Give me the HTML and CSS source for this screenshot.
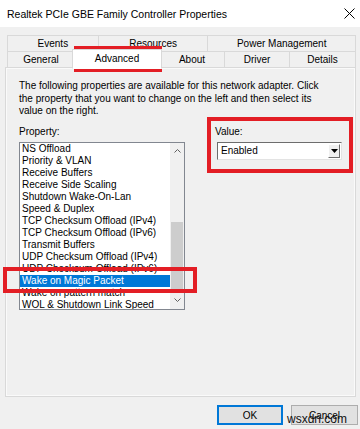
FILE: index.html
```html
<!DOCTYPE html>
<html lang="en">
<head>
    <meta charset="UTF-8">
    <title>Realtek PCIe GBE Family Controller Properties</title>
    <link rel="stylesheet" href="styles.css">
</head>
<body>
    <div class="window">
        <div class="titlebar">
            <span class="title">Realtek PCIe GBE Family Controller Properties</span>
            <svg class="close" width="11" height="11" viewBox="0 0 11 11">
                <path d="M0.5 0.5 L10.5 10.5 M10.5 0.5 L0.5 10.5" stroke="#000" stroke-width="1" fill="none"/>
            </svg>
        </div>

        <div class="tabs">
            <div class="tab-row">
                <div class="tab w-events">Events</div>
                <div class="tab w-resources">Resources</div>
                <div class="tab w-power">Power Management</div>
            </div>
            <div class="tab-row second">
                <div class="tab w-general">General</div>
                <div class="tab w-advanced active">Advanced</div>
                <div class="tab w-about">About</div>
                <div class="tab w-driver">Driver</div>
                <div class="tab w-details">Details</div>
            </div>
        </div>

        <div class="panel">
            <p class="intro">The following properties are available for this network adapter. Click<br>the property that you want to change on the left and then select its<br>value on the right.</p>
            <div class="fields">
                <div class="prop-col">
                    <label class="field-label">Property:</label>
                    <div class="listbox">
                        <ul class="items">
                            <li>NS Offload</li>
                            <li>Priority &amp; VLAN</li>
                            <li>Receive Buffers</li>
                            <li>Receive Side Scaling</li>
                            <li>Shutdown Wake-On-Lan</li>
                            <li>Speed &amp; Duplex</li>
                            <li>TCP Checksum Offload (IPv4)</li>
                            <li>TCP Checksum Offload (IPv6)</li>
                            <li>Transmit Buffers</li>
                            <li>UDP Checksum Offload (IPv4)</li>
                            <li>UDP Checksum Offload (IPv6)</li>
                            <li class="selected">Wake on Magic Packet</li>
                            <li>Wake on pattern match</li>
                            <li>WOL &amp; Shutdown Link Speed</li>
                        </ul>
                        <div class="scrollbar">
                            <div class="sb-arrow">
                                <svg width="7" height="4" viewBox="0 0 7 4"><path d="M0.5 3.5 L3.5 0.5 L6.5 3.5" stroke="#606060" fill="none"/></svg>
                            </div>
                            <div class="sb-track"><div class="sb-thumb"></div></div>
                            <div class="sb-arrow">
                                <svg width="7" height="4" viewBox="0 0 7 4"><path d="M0.5 0.5 L3.5 3.5 L6.5 0.5" stroke="#606060" fill="none"/></svg>
                            </div>
                        </div>
                    </div>
                </div>
                <div class="value-col">
                    <label class="field-label">Value:</label>
                    <div class="combo">
                        <span class="combo-text">Enabled</span>
                        <span class="combo-btn">
                            <svg width="7" height="4" viewBox="0 0 7 4"><polygon points="0,0 7,0 3.5,4" fill="#000"/></svg>
                        </span>
                    </div>
                </div>
            </div>
        </div>

        <div class="buttons">
            <button class="btn default">OK</button>
            <button class="btn">Cancel</button>
        </div>

        <!-- red highlight frames drawn over the dialog -->
        <div class="mark mark-tab"></div>
        <div class="mark mark-value"></div>
        <div class="mark mark-item"></div>
        <span class="watermark">wsxdn.com</span>
    </div>
</body>
</html>
```

FILE: styles.css
```css
html, body {
    margin: 0;
    background: #f0f0f0;
    font-family: "Liberation Sans", Arial, sans-serif;
    font-size: 10px;
    color: #000;
}
.window {
    position: relative;
    width: 360px;
    height: 429px;
    overflow: hidden;
}
.titlebar {
    height: 27px;
    background: #fff;
    display: flex;
    align-items: center;
    justify-content: space-between;
    padding: 0 5px 0 7px;
}
.title {
    font-size: 10.5px;
}
.tabs {
    margin: 8px 4px 0 7px;
}
.tab-row {
    display: flex;
}
.tab-row.second {
    margin-top: -1px;
}
.tab {
    box-sizing: border-box;
    height: 17px;
    border: 1px solid #d9d9d9;
    margin-left: -1px;
    display: flex;
    align-items: center;
    justify-content: center;
    background: #f0f0f0;
}
.tab:first-child {
    margin-left: 0;
}
.tab.active {
    position: relative;
    z-index: 1;
    height: 20px;
    margin: -2px -2px -1px -3px;
    padding-bottom: 2px;
    background: #fff;
    border-bottom-color: #fff;
}
.w-events { width: 92px; }
.w-resources { width: 111px; }
.w-power { width: 149px; }
.w-general { width: 68px; }
.w-advanced { width: 90px; }
.w-about { width: 66px; }
.w-driver { width: 66px; }
.w-details { width: 67px; }

.panel {
    box-sizing: border-box;
    height: 330px;
    margin: -1px 4px 0 5px;
    border: 1px solid #d9d9d9;
    box-shadow: inset 0 0 0 1px #fafafa;
    padding: 12px 13px 0 13px;
}
.intro {
    margin: 0;
    line-height: 12.5px;
}
.fields {
    display: flex;
    margin-top: 8px;
}
.field-label {
    display: block;
    line-height: 12px;
    margin-bottom: 4px;
}
.prop-col {
    width: 168px;
}
.value-col {
    margin-left: 30px;
    width: 127px;
}
.listbox {
    box-sizing: border-box;
    display: flex;
    height: 168px;
    border: 1px solid #828790;
    background: #fff;
    overflow: hidden;
}
.items {
    list-style: none;
    margin: 0;
    padding: 0;
    flex: 1;
}
.items li {
    height: 12px;
    line-height: 12px;
    padding-left: 2px;
    white-space: nowrap;
}
.items li.selected {
    background: #0078d7;
    color: #fff;
}
.scrollbar {
    width: 14px;
    background: #f0f0f0;
    display: flex;
    flex-direction: column;
}
.sb-arrow {
    height: 17px;
    display: flex;
    align-items: center;
    justify-content: center;
}
.sb-track {
    flex: 1;
}
.sb-thumb {
    margin: 62px 1px 0 1px;
    height: 67px;
    background: #cdcdcd;
}
.combo {
    box-sizing: border-box;
    display: flex;
    align-items: stretch;
    width: 125px;
    height: 18px;
    margin-left: 2px;
    border: 1px solid;
    border-color: #6d6d6d #e3e3e3 #e3e3e3 #6d6d6d;
    background: #fff;
}
.combo-text {
    flex: 1;
    padding-left: 3px;
    line-height: 16px;
}
.combo-btn {
    box-sizing: border-box;
    width: 12px;
    margin: 1px;
    background: #f0f0f0;
    border: 1px solid;
    border-color: #fff #6d6d6d #6d6d6d #fff;
    display: flex;
    align-items: center;
    justify-content: center;
}
.buttons {
    display: flex;
    justify-content: flex-end;
    gap: 8px;
    margin: 8px 2px 0 0;
}
.btn {
    box-sizing: border-box;
    height: 20px;
    width: 67px;
    padding: 0;
    font: inherit;
    color: #000;
    background: #e1e1e1;
    border: 1px solid #adadad;
}
.btn.default {
    width: 66px;
    border-color: #0078d7;
    box-shadow: inset 0 0 0 1px #0078d7;
}
.mark {
    position: absolute;
    box-sizing: border-box;
    border: 4px solid #e31e25;
}
.mark-tab {
    left: 74px;
    top: 46px;
    width: 88px;
    height: 26px;
}
.mark-value {
    left: 207px;
    top: 117px;
    width: 146px;
    height: 56px;
}
.mark-item {
    left: 3px;
    top: 267px;
    width: 194px;
    height: 26px;
}
.watermark {
    position: absolute;
    left: 287px;
    top: 412px;
    font-size: 12px;
    line-height: 14px;
    color: #111;
}
```
